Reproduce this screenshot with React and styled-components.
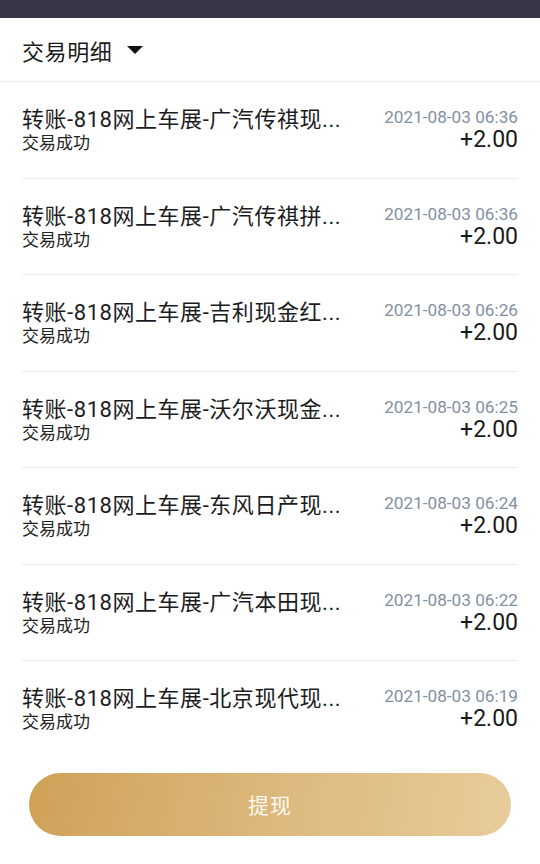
import React from 'react';
import styled, { createGlobalStyle } from 'styled-components';

const GlobalStyle = createGlobalStyle`
  html, body {
    margin: 0;
    padding: 0;
    background: #ffffff;
  }
  body {
    font-family: Roboto, "Noto Sans CJK SC", sans-serif;
    color: #1d1d1f;
  }
`;

const records = [
  { title: '转账-818网上车展-广汽传祺现...', time: '2021-08-03 06:36' },
  { title: '转账-818网上车展-广汽传祺拼...', time: '2021-08-03 06:36' },
  { title: '转账-818网上车展-吉利现金红...', time: '2021-08-03 06:26' },
  { title: '转账-818网上车展-沃尔沃现金...', time: '2021-08-03 06:25' },
  { title: '转账-818网上车展-东风日产现...', time: '2021-08-03 06:24' },
  { title: '转账-818网上车展-广汽本田现...', time: '2021-08-03 06:22' },
  { title: '转账-818网上车展-北京现代现...', time: '2021-08-03 06:19' },
];

const Page = styled.div`
  width: 540px;
  height: 864px;
  display: flex;
  flex-direction: column;
  overflow: hidden;
`;

const StatusBar = styled.div`
  height: 18px;
  background: #373748;
  flex-shrink: 0;
`;

const Header = styled.div`
  height: 63px;
  display: flex;
  align-items: center;
  padding: 0 22px;
  border-bottom: 1px solid #e8eced;
  flex-shrink: 0;
`;

const HeaderTitle = styled.span`
  font-size: 22px;
  color: #1a1a1a;
  letter-spacing: 0.6px;
`;

const Caret = styled.span`
  margin-left: 15px;
  width: 0;
  height: 0;
  border-left: 8.5px solid transparent;
  border-right: 8.5px solid transparent;
  border-top: 8px solid #111;
  margin-top: 1px;
`;

const List = styled.div`
  padding: 0 22px;
`;

const Row = styled.div`
  height: 96.5px;
  box-sizing: border-box;
  padding-top: 25px;
  display: flex;
  justify-content: space-between;
  border-bottom: ${(p) => (p.$last ? 'none' : '1px solid #e8eced')};
`;

const Left = styled.div`
  display: flex;
  flex-direction: column;
`;

const Title = styled.div`
  font-size: 22px;
  line-height: 26px;
  letter-spacing: 0.55px;
  color: #1c1c1e;
  white-space: nowrap;
`;

const Status = styled.div`
  font-size: 17px;
  line-height: 20px;
  color: #222;
`;

const Right = styled.div`
  display: flex;
  flex-direction: column;
  align-items: flex-end;
`;

const Time = styled.div`
  font-size: 17.2px;
  line-height: 20px;
  color: #8390a2;
`;

const Amount = styled.div`
  font-size: 23px;
  line-height: 26px;
  color: #1a1a1a;
`;

const Footer = styled.div`
  padding-top: 15px;
  display: flex;
  justify-content: center;
`;

const WithdrawButton = styled.button`
  width: 482px;
  height: 63px;
  border: none;
  border-radius: 32px;
  background: linear-gradient(100deg, #cfa157 0%, #dcb87c 50%, #e7cc9b 100%);
  color: #fdf9f0;
  font-family: Roboto, "Noto Sans CJK SC", sans-serif;
  font-size: 21px;
  letter-spacing: 1px;
`;

export default function App() {
  return (
    <Page>
      <GlobalStyle />
      <StatusBar />
      <Header>
        <HeaderTitle>交易明细</HeaderTitle>
        <Caret />
      </Header>
      <List>
        {records.map((r, i) => (
          <Row key={i} $last={i === records.length - 1}>
            <Left>
              <Title>{r.title}</Title>
              <Status>交易成功</Status>
            </Left>
            <Right>
              <Time>{r.time}</Time>
              <Amount>+2.00</Amount>
            </Right>
          </Row>
        ))}
      </List>
      <Footer>
        <WithdrawButton>提现</WithdrawButton>
      </Footer>
    </Page>
  );
}
